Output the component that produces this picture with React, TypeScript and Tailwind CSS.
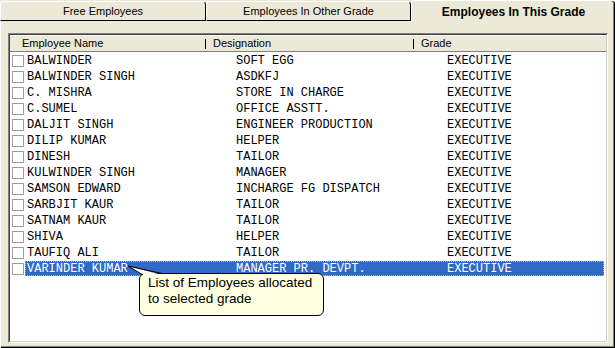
const rows: [string, string][] = [
  ["BALWINDER", "SOFT EGG"],
  ["BALWINDER SINGH", "ASDKFJ"],
  ["C. MISHRA", "STORE IN CHARGE"],
  ["C.SUMEL", "OFFICE ASSTT."],
  ["DALJIT SINGH", "ENGINEER PRODUCTION"],
  ["DILIP KUMAR", "HELPER"],
  ["DINESH", "TAILOR"],
  ["KULWINDER SINGH", "MANAGER"],
  ["SAMSON EDWARD", "INCHARGE FG DISPATCH"],
  ["SARBJIT KAUR", "TAILOR"],
  ["SATNAM KAUR", "TAILOR"],
  ["SHIVA", "HELPER"],
  ["TAUFIQ ALI", "TAILOR"],
  ["VARINDER KUMAR", "MANAGER PR. DEVPT."],
];

const selected = 13;

export default function App() {
  return (
    <div className="relative flex h-[348px] w-[615px] flex-col overflow-hidden bg-[#ECE9D8] font-['Liberation_Sans',Arial,sans-serif] text-black">
      {/* Tabs */}
      <div className="flex h-[21px] shrink-0 items-end">
        <div className="flex h-[20px] w-[206px] items-center justify-center rounded-t-[4px] border-t border-l border-r border-b border-t-white border-l-white border-r-black border-b-black pt-[1px] text-[11px]">
          Free Employees
        </div>
        <div className="flex h-[20px] w-[205px] items-center justify-center rounded-t-[4px] border-t border-l border-r border-b border-t-white border-l-white border-r-black border-b-black pt-[1px] text-[11px]">
          Employees In Other Grade
        </div>
        <div className="flex h-[21px] flex-1 items-center justify-center rounded-tl-[4px] rounded-tr-[3px] border-t border-l border-white pt-[1px] text-[12px] font-bold shadow-[inset_-1px_0_0_#000,inset_-2px_0_0_#808080]">
          Employees In This Grade
        </div>
      </div>

      {/* Tab body */}
      <div className="flex flex-1 flex-col border-l border-l-white pt-[12px] pr-[7px] pb-[5px] pl-[7px] shadow-[inset_-1px_-1px_0_#000,inset_-2px_-2px_0_#808080]">
        <div className="flex flex-1 flex-col border border-t-[#808080] border-l-[#808080] border-r-white border-b-white">
          <div className="flex flex-1 flex-col border border-t-[#404040] border-l-[#404040] border-r-[#D4D0C8] border-b-[#D4D0C8] bg-white">
            {/* Header */}
            <div className="flex h-[17px] shrink-0 items-center border-t border-b border-t-white border-b-[#808080] bg-[#ECE9D8] text-[11px]">
              <div className="w-[195px] pl-[12px]">Employee Name</div>
              <div className="flex w-[208px] items-center">
                <span className="mr-[7px] h-[10px] w-px bg-black" />
                Designation
              </div>
              <div className="flex flex-1 items-center">
                <span className="mr-[7px] h-[10px] w-px bg-black" />
                Grade
              </div>
            </div>

            {/* Rows */}
            <div className="flex flex-col font-['Liberation_Mono','Courier_New',monospace] text-[12px] leading-[16px]">
              {rows.map(([name, desig], i) => {
                const sel = i === selected;
                return (
                  <div key={name} className="flex h-[16px] items-center pt-[1px] pl-[2px] pr-[2px]">
                    <span className="h-[12px] w-[12px] shrink-0 border border-[#9C9C9C] bg-white" />
                    <div
                      className={
                        sel
                          ? "ml-[1px] flex h-[15px] flex-1 items-center whitespace-pre bg-[#316AC5] text-white outline-1 -outline-offset-1 outline-dotted outline-[#E9B04C]"
                          : "ml-[1px] flex h-[15px] flex-1 items-center whitespace-pre"
                      }
                    >
                      <span className="w-[211px] pl-[2px]">{name}</span>
                      <span className="w-[211px]">{desig}</span>
                      <span className="flex-1">EXECUTIVE</span>
                    </div>
                  </div>
                );
              })}
            </div>
          </div>
        </div>
      </div>

      {/* Balloon tooltip */}
      <div className="absolute left-[139px] top-[273px] h-[43px] w-[185px] rounded-[6px] border border-black bg-[#FFFFE1] pt-[1px] pl-[8px] text-[13.5px] leading-[16px]">
        <div>List of Employees allocated</div>
        <div>to selected grade</div>
      </div>
      <svg className="absolute left-[126px] top-[264px]" width="40" height="13" viewBox="0 0 40 13">
        <polygon points="2,2 17,11 36,11" fill="#FFFFE1" />
        <polyline points="17,11 2,2 36,9.5" fill="none" stroke="#000" strokeWidth="1" />
      </svg>
    </div>
  );
}
